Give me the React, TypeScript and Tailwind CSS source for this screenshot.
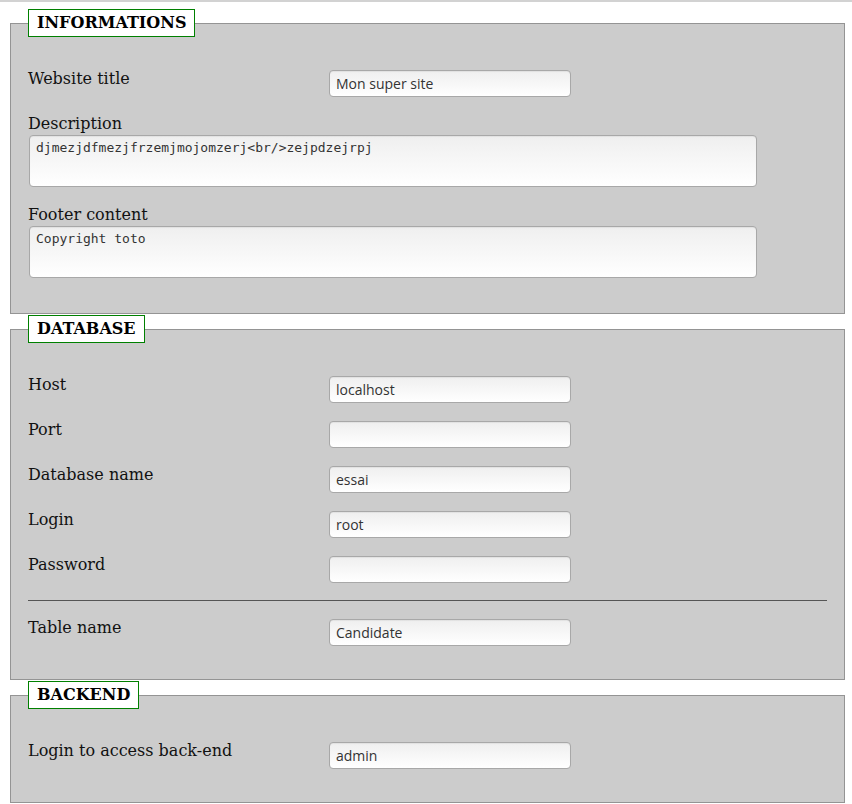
import React from 'react';

const serif = "font-['DejaVu_Serif',serif]";
const inputCls =
  "mt-[4px] h-[27px] w-[242px] rounded-[4px] border border-[#a8a8a8] bg-linear-to-b from-[#efefef] to-white px-[6px] font-['Open_Sans',sans-serif] text-[14px] text-[#333] shadow-[inset_0_1px_1px_rgba(0,0,0,0.06)] outline-none";
const areaCls =
  "ml-px block h-[52px] w-[728px] resize-none rounded-[4px] border border-[#a8a8a8] bg-linear-to-b from-[#efefef] to-white px-[6px] py-[3px] font-['DejaVu_Sans_Mono',monospace] text-[13px] leading-[17px] text-[#333] shadow-[inset_0_1px_1px_rgba(0,0,0,0.06)] outline-none";

const Row = ({ label, value }: { label: string; value: string }) => (
  <div className="flex items-start">
    <label className={`w-[301px] shrink-0 pt-px text-[16px] leading-[24px] text-[#111] ${serif}`}>{label}</label>
    <input className={inputCls} defaultValue={value} readOnly />
  </div>
);

const AreaRow = ({ label, value }: { label: string; value: string }) => (
  <div>
    <label className={`block pt-px text-[16px] leading-[23px] text-[#111] ${serif}`}>{label}</label>
    <textarea className={areaCls} defaultValue={value} readOnly />
  </div>
);

const Section = ({ title, children }: { title: string; children: React.ReactNode }) => (
  <fieldset className="ml-[10px] mr-[7px] mt-px border border-[#949494] bg-[#cccccc] pl-[17px] pr-[17px] pb-[33px] first:mt-[7px]">
    <legend
      className={`border border-[#008000] bg-white px-[8px] py-[4px] text-[16px] font-bold leading-[18px] text-black ${serif}`}
    >
      {title}
    </legend>
    <div className="flex flex-col gap-[14px] pt-[29px]">{children}</div>
  </fieldset>
);

export default function App() {
  return (
    <div className="min-h-[804px] w-[852px] bg-white">
      <div className="h-[2px] bg-[#d2d2d2]" />
      <form>
        <Section title="INFORMATIONS">
          <Row label="Website title" value="Mon super site" />
          <AreaRow label="Description" value="djmezjdfmezjfrzemjmojomzerj<br/>zejpdzejrpj" />
          <div className="mt-px mb-[2px]">
            <AreaRow label="Footer content" value="Copyright toto" />
          </div>
        </Section>
        <Section title="DATABASE">
          <Row label="Host" value="localhost" />
          <Row label="Port" value="" />
          <Row label="Database name" value="essai" />
          <Row label="Login" value="root" />
          <Row label="Password" value="" />
          <hr className="mt-[3px] border-0 border-t border-[#555]" />
          <Row label="Table name" value="Candidate" />
        </Section>
        <Section title="BACKEND">
          <Row label="Login to access back-end" value="admin" />
        </Section>
      </form>
    </div>
  );
}
